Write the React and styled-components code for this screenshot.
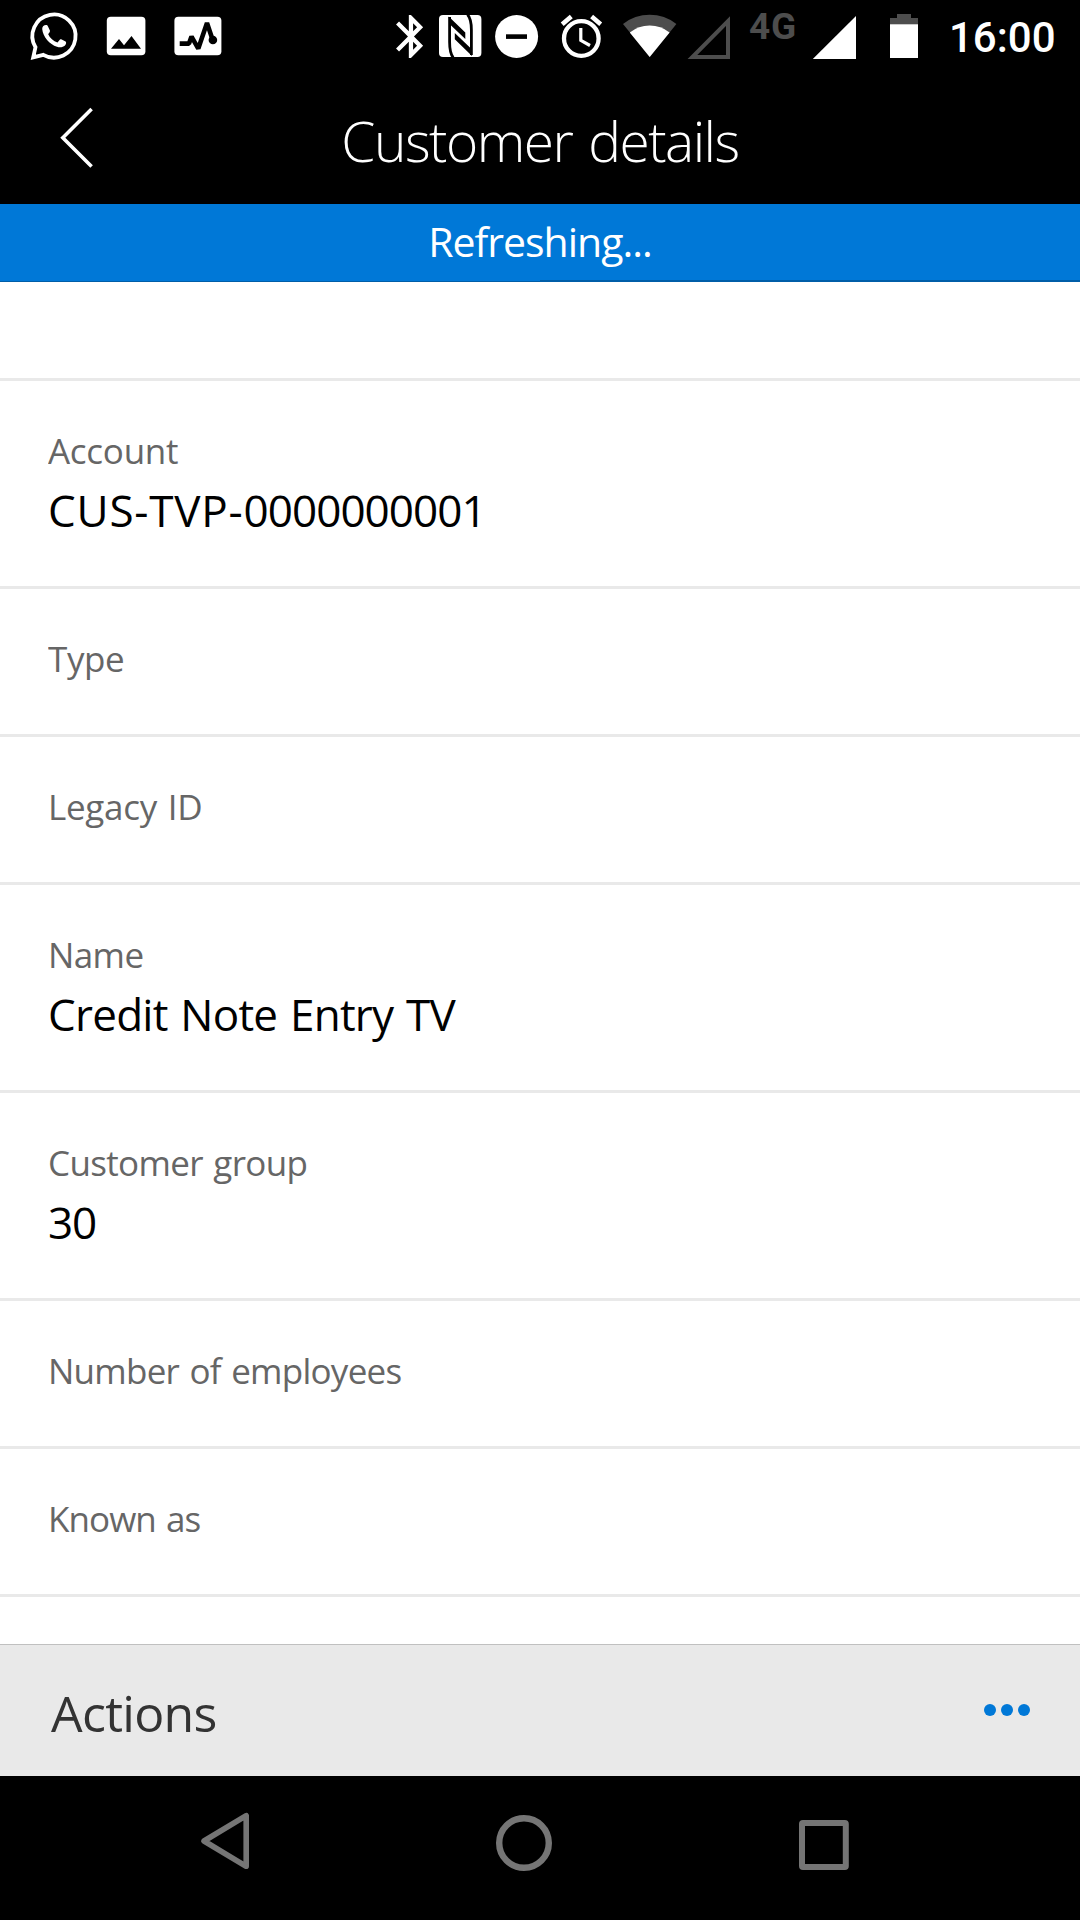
import React from "react";
import styled, { createGlobalStyle } from "styled-components";

const Global = createGlobalStyle`
  * { box-sizing: border-box; }
  body { margin: 0; background: #000; }
`;

const Screen = styled.div`
  width: 1080px;
  height: 1920px;
  display: flex;
  flex-direction: column;
  overflow: hidden;
  background: #fff;
  font-family: "Open Sans", "Noto Sans", sans-serif;
`;

const StatusBar = styled.header`
  height: 72px;
  flex: none;
  display: flex;
  align-items: flex-start;
  padding-left: 24px;
  background: #000;
  color: #fff;
  font-family: Roboto, sans-serif;
`;

const StatusSvg = styled.svg`
  display: block;
  flex: none;
`;

const NetworkType = styled.span`
  width: 62px;
  padding-left: 18px;
  flex: none;
  color: #4d4d4d;
  font-size: 37px;
  font-weight: 700;
  line-height: 54px;
  letter-spacing: 0.8px;
`;

const Clock = styled.time`
  margin-left: 23px;
  font-size: 42px;
  font-weight: 500;
  line-height: 76px;
`;

const TitleBar = styled.div`
  height: 132px;
  flex: none;
  display: grid;
  grid-template-columns: 152px 1fr 152px;
  background: #000;
  color: #fff;
`;

const BackButton = styled.button`
  display: flex;
  align-items: flex-start;
  height: 132px;
  padding: 32px 0 0 58px;
  border: 0;
  background: none;
`;

const Title = styled.h1`
  height: 132px;
  margin: 0;
  text-align: center;
  font-size: 55px;
  font-weight: 300;
  line-height: 138px;
  white-space: nowrap;
  letter-spacing: -1.5px;
  word-spacing: 3px;
`;

const Refresh = styled.div`
  height: 78px;
  flex: none;
  display: flex;
  flex-direction: column;
  justify-content: space-between;
  background: #0078d7;
  color: #fff;
  text-align: center;
  font-size: 41px;
  line-height: 75px;
  letter-spacing: -1px;
`;

const Progress = styled.div`
  display: flex;
  align-items: flex-end;
  &::before, &::after { content: ""; flex: 1; background: #005ea8; }
  &::before { height: 1px; }
  &::after { height: 2px; }
`;

const Fields = styled.main`
  height: 1362px;
  flex: none;
  overflow: hidden;
`;

const Row = styled.section`
  height: ${(p) => (p.$filled ? 208 : 148)}px;
  padding: 48px 49px 0 48px;
  border-bottom: 3px solid #e9e9e9;
`;

const Spacer = styled.div`
  height: 99px;
  border-bottom: 3px solid #e9e9e9;
`;

const Label = styled.div`
  height: 43px;
  clip-path: inset(-10px 0 0 0);
  color: #666;
  font-size: 35px;
  line-height: 44px;
  white-space: nowrap;
  word-spacing: 2px;
  letter-spacing: ${(p) => p.$track}px;
`;

const Value = styled.div`
  margin-top: 8px;
  color: #000;
  font-size: 44px;
  line-height: 60px;
  white-space: nowrap;
  word-spacing: 2px;
`;

const Run = styled.span`
  letter-spacing: ${(p) => p.$track}px;
`;

const ActionBar = styled.footer`
  height: 132px;
  flex: none;
  display: flex;
  justify-content: space-between;
  padding: 0 50.5px 0 51px;
  border-top: 1px solid #c0c0c0;
  background: #e9e9e9;
  color: #333;
`;

const ActionTitle = styled.span`
  font-size: 50px;
  line-height: 136px;
  letter-spacing: -0.7px;
`;

const More = styled.button`
  display: flex;
  align-items: flex-start;
  gap: 5px;
  padding: 58.5px 0 0;
  border: 0;
  background: none;
`;

const Dot = styled.i`
  width: 12px;
  height: 12px;
  border-radius: 50%;
  background: #0078d7;
`;

const NavBar = styled.nav`
  height: 144px;
  flex: none;
  display: flex;
  background: #000;
`;

const NavSvg = styled.svg`
  display: block;
  flex: none;
  fill: none;
  stroke: #757575;
  stroke-linejoin: round;
`;

function StatusIcon({ from, to, children }) {
  return (
    <StatusSvg width={to - from} height="72" viewBox={`${from} 0 ${to - from} 72`}>
      {children}
    </StatusSvg>
  );
}

const fields = [
  { label: "Account", track: -0.27, value: [["CUS-TVP-", 0.8], ["0000000001", -0.95]] },
  { label: "Type", track: -0.37 },
  { label: "Legacy ID", track: -0.3 },
  { label: "Name", track: -0.6, value: [["Credit Note Entry TV", -0.75]] },
  { label: "Customer group", track: -0.65, value: [["30", -1.1]] },
  { label: "Number of employees", track: -0.74 },
  { label: "Known as", track: -0.94 },
];

export default function App() {
  return (
    <Screen>
      <Global />
      <StatusBar>
        <StatusIcon from={24} to={92}>
          <path d="M43.3 54.8L33.2 57.3L35.5 47.2A21.6 21.6 0 1 1 43.3 54.8Z" fill="none" stroke="#fff" strokeWidth="3.8" />
          <path fill="#fff" d="M42.2 29C42.2 26.5 44 25 46 25C47 25 47.5 25.3 48 26.5L50 30.8C50.3 31.7 48.5 33.8 48.2 34.2C49.8 38 53.5 41 57.5 42.6L60 39.6C60.5 39 61 39.1 61.7 39.4L65.6 41.4C66.6 42 66 44.5 65 45.5C63 47.3 60 47.8 57 46.8C49.5 44.3 43 37 42.2 29Z" />
        </StatusIcon>
        <StatusIcon from={92} to={160}>
          <rect x="106.8" y="16.7" width="38.6" height="38.6" rx="4" fill="#fff" />
          <path d="M111 48.7L119 39L124 45.2L131.5 36L141 48.7Z" />
        </StatusIcon>
        <StatusIcon from={160} to={380}>
          <rect x="174.4" y="16.7" width="47" height="38.6" rx="4" fill="#fff" />
          <path
            d="M179.7 43.6H189L191.5 36.6L198.3 48.6L207 23L212.7 40"
            fill="none"
            stroke="#000"
            strokeWidth="4.6"
            strokeLinejoin="bevel"
          />
          <circle cx="212.9" cy="40" r="4.3" />
        </StatusIcon>
        <StatusIcon from={380} to={432}>
          <path transform="translate(385.4 10.7) scale(2.13 2.15)" fill="#fff" d="M17.71 7.71L12 2h-1v7.59L6.41 5 5 6.41 10.59 12 5 17.59 6.41 19 11 14.41V22h1l5.71-5.71-4.3-4.29 4.3-4.29zM13 5.83l1.88 1.88L13 9.59V5.83zm1.88 10.46L13 18.17v-3.76l1.88 1.88z" />
        </StatusIcon>
        <StatusIcon from={432} to={488}>
          <rect x="439" y="15" width="42.4" height="42" rx="4" fill="#fff" />
          <path d="M449.6 17V42Q449.6 53 453.2 57.5M467.5 14.5Q471.4 19 471.4 30V55" fill="none" stroke="#000" strokeWidth="2.8" />
          <path d="M448.7 16.5L465.3 32.6V39L449.5 24ZM454.8 33L472 49.5V56L454.8 39.2Z" />
        </StatusIcon>
        <StatusIcon from={488} to={546}>
          <circle cx="516.6" cy="36.5" r="21.5" fill="#fff" />
          <rect x="506" y="34.3" width="21" height="4.6" />
        </StatusIcon>
        <StatusIcon from={546} to={612}>
          <g fill="none" stroke="#fff">
            <circle cx="581.3" cy="38.5" r="17.3" strokeWidth="4.3" />
            <path d="M580.8 28V40.3L590 45.5" strokeWidth="3.2" />
            <path d="M562.2 24.2L571.3 16.6M591.6 16.6L600.7 24.2" strokeWidth="4.6" />
          </g>
        </StatusIcon>
        <StatusIcon from={612} to={684}>
          <path d="M649.7 57L623 24A43 43 0 0 1 676.4 24Z" fill="#4d4d4d" />
          <path d="M649.7 57L629.8 32.4A32 32 0 0 1 669.6 32.4Z" fill="#fff" />
        </StatusIcon>
        <StatusIcon from={684} to={731}>
          <path d="M692.4 57H728V21.2Z" fill="none" stroke="#4d4d4d" strokeWidth="4" />
        </StatusIcon>
        <NetworkType>4G</NetworkType>
        <StatusIcon from={793} to={870}>
          <path d="M812.8 59L856 16V59Z" fill="#fff" />
        </StatusIcon>
        <StatusIcon from={870} to={926}>
          <path d="M897 14H911V18H918V58H890V18H897Z" fill="#4d4d4d" />
          <rect x="890" y="24.3" width="28" height="33.7" fill="#fff" />
        </StatusIcon>
        <Clock>16:00</Clock>
      </StatusBar>

      <TitleBar>
        <BackButton aria-label="Back">
          <svg width="40" height="68" viewBox="58 104 40 68" fill="none" stroke="#fff" strokeWidth="3.6">
            <path d="M91.6 109L62.8 137.8L91.6 166.6" />
          </svg>
        </BackButton>
        <Title>Customer details</Title>
      </TitleBar>

      <Refresh>
        <span>Refreshing...</span>
        <Progress />
      </Refresh>

      <Fields>
        <Spacer />
        {fields.map((f) => (
          <Row key={f.label} $filled={Boolean(f.value)}>
            <Label $track={f.track}>{f.label}</Label>
            {f.value && (
              <Value>
                {f.value.map(([text, track]) => (
                  <Run key={text} $track={track}>{text}</Run>
                ))}
              </Value>
            )}
          </Row>
        ))}
      </Fields>

      <ActionBar>
        <ActionTitle>Actions</ActionTitle>
        <More aria-label="More actions">
          <Dot />
          <Dot />
          <Dot />
        </More>
      </ActionBar>

      <NavBar>
        <NavSvg width="400" height="144" viewBox="0 1776 400 144" strokeWidth="5.6">
          <path d="M246.2 1815.6V1866.3L204 1841Z" />
        </NavSvg>
        <NavSvg width="300" height="144" viewBox="400 1776 300 144" strokeWidth="6.4">
          <circle cx="524" cy="1843" r="24.8" />
        </NavSvg>
        <NavSvg width="380" height="144" viewBox="700 1776 380 144" strokeWidth="6">
          <rect x="802" y="1823" width="43.8" height="44" rx="1" />
        </NavSvg>
      </NavBar>
    </Screen>
  );
}
